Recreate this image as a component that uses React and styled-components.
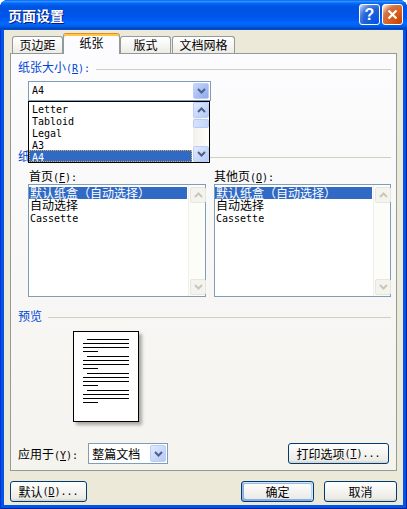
import React from "react";
import styled, { createGlobalStyle } from "styled-components";

const GlobalStyle = createGlobalStyle`
  html, body { margin: 0; padding: 0; background: #fff; }
  body {
    font-family: "Noto Sans CJK SC", "DejaVu Sans", sans-serif;
    font-size: 12px;
    color: #000;
  }
  * { box-sizing: border-box; }
`;

const Window = styled.div`
  width: 407px;
  height: 509px;
  display: flex;
  flex-direction: column;
  background: #0055e5;
  border-radius: 8px 8px 0 0;
  overflow: hidden;
  box-shadow: inset 1px 0 #0831d9, inset -1px 0 #001ea0, inset 0 -1px #001ea0;
`;

const TitleBar = styled.div`
  height: 30px;
  flex: none;
  display: flex;
  align-items: center;
  padding: 0 4px 1px 8px;
  background: linear-gradient(
    to bottom,
    #0058ee 0%, #3593ff 4%, #288eff 6%, #127dff 8%, #036ffc 10%,
    #0262ee 14%, #0057e5 20%, #0054e3 24%, #0055eb 56%, #005bf5 66%,
    #026afe 76%, #0062ef 86%, #0052d6 92%, #0040ab 94%, #0055e5 100%
  );
`;

const Title = styled.div`
  flex: 1;
  color: #fff;
  font-size: 14px;
  font-weight: bold;
  line-height: 16px;
  text-shadow: 1px 1px #0a1883;
`;

const CaptionButtons = styled.div`
  display: flex;
  gap: 2px;
`;

const CaptionButton = styled.div`
  width: 21px;
  height: 21px;
  border: 1px solid #fff;
  border-radius: 3px;
  display: grid;
  place-items: center;
  color: #fff;
  font-family: "Liberation Sans", sans-serif;
  font-weight: bold;
  font-size: 16px;
  line-height: 1;
  background: ${(p) =>
    p.$close
      ? "radial-gradient(circle at 90% 90%, #cc4600 0%, #dc6527 55%, #cd7546 70%, #ffccb2 90%, #fff 100%)"
      : "radial-gradient(circle at 90% 90%, #0054e9 0%, #2263d5 55%, #4479e4 70%, #a3bbec 90%, #fff 100%)"};
`;

const Body = styled.div`
  flex: 1;
  margin: 0 4px 4px;
  padding: 3px 6px 0;
  background: #ece9d8;
  display: flex;
  flex-direction: column;
`;

const TabStrip = styled.div`
  height: 20px;
  flex: none;
  display: flex;
  align-items: flex-end;
  padding-left: 2px;
  position: relative;
  z-index: 2;
`;

const Tab = styled.div`
  width: ${(p) => p.$w}px;
  height: ${(p) => (p.$active ? 21 : 17)}px;
  margin-bottom: ${(p) => (p.$active ? -1 : 0)}px;
  margin-left: ${(p) => p.$gap || 0}px;
  display: flex;
  align-items: center;
  justify-content: center;
  padding-bottom: ${(p) => (p.$active ? 2 : 0)}px;
  line-height: 12px;
  border: 1px solid #919b9c;
  border-bottom: none;
  border-radius: 3px 3px 0 0;
  background: ${(p) =>
    p.$active ? "#fcfcfe" : "linear-gradient(to bottom, #ffffff 0%, #f7f7f4 45%, #ecebe5 100%)"};
  ${(p) =>
    p.$active &&
    `
    border-top: 1px solid #e68b2c;
    box-shadow: inset 0 2px #ffc73c;
  `}
`;

const Panel = styled.div`
  position: relative;
  height: 418px;
  flex: none;
  border: 1px solid #919b9c;
  background: linear-gradient(to bottom, #fcfcfe, #f4f3ee);
  padding: 8px 5px 0 7px;
  display: flex;
  flex-direction: column;
`;

const GroupHeader = styled.div`
  display: flex;
  align-items: center;
  gap: 6px;
  height: 12px;
  line-height: 12px;
  color: #0046d5;
  white-space: nowrap;
  margin-top: ${(p) => p.$mt || 0}px;

  &::after {
    content: "";
    flex: 1;
    height: 1px;
    margin-top: 2px;
    background: #d0d0bf;
  }
`;

const Latin = styled.span`
  font-family: "DejaVu Sans Mono", monospace;
  font-size: 10px;
`;

const ComboWrap = styled.div`
  position: relative;
  width: 183px;
  margin: 7px 0 0 10px;
`;

const Combo = styled.div`
  width: ${(p) => p.$w}px;
  height: ${(p) => p.$h}px;
  border: 1px solid #7f9db9;
  background: #fff;
  display: flex;
  align-items: stretch;
  padding: 1px;
  margin-left: ${(p) => p.$ml || 0}px;
`;

const ComboText = styled.div`
  flex: 1;
  display: flex;
  align-items: center;
  padding-left: 2px;
  line-height: 12px;
`;

const ArrowButton = styled.div`
  width: 16px;
  flex: none;
  display: grid;
  place-items: center;
  border: 1px solid ${(p) => (p.$disabled ? "#e8e6dc" : "#bccdf8")};
  border-radius: 2px;
  background: ${(p) =>
    p.$disabled
      ? "#f4f3ee"
      : p.$hot
      ? "linear-gradient(135deg, #c9d8fc 0%, #a9c0f6 50%, #8fabef 100%)"
      : "linear-gradient(135deg, #e2ebfe 0%, #c8d7fb 55%, #b6c9f6 100%)"};
  height: ${(p) => (p.$h ? `${p.$h}px` : "auto")};
`;

const Dropdown = styled.div`
  position: absolute;
  left: 0;
  top: 100%;
  width: 182px;
  height: 62px;
  z-index: 5;
  border: 1px solid #000;
  background: #fff;
  display: flex;
`;

const Options = styled.div`
  flex: 1;
  margin-right: 1px;
`;

const Option = styled.div`
  height: 12px;
  line-height: 10px;
  padding-left: 2px;
  border: 1px solid transparent;
  white-space: nowrap;
  ${(p) =>
    p.$selected &&
    `
    background: #316ac5;
    color: #fff;
    border: 1px dotted #e8b04a;
  `}
`;

const ScrollBar = styled.div`
  width: ${(p) => p.$w}px;
  flex: none;
  display: flex;
  flex-direction: column;
  padding: ${(p) => (p.$disabled ? "2px 0 1px 1px" : "0")};
  background: ${(p) =>
    p.$disabled ? "#fcfcf9" : "linear-gradient(to right, #f3f1ec, #fefefb)"};
  border-left: ${(p) => (p.$disabled ? "1px solid #f0efe8" : "none")};
`;

const Thumb = styled.div`
  height: 9px;
  margin-top: 1px;
  border: 1px solid #b8cbf7;
  border-radius: 2px;
  background: linear-gradient(to right, #d6e2fd, #c4d5fb);
`;

const Spacer = styled.div`
  flex: 1;
`;

const SourceGrid = styled.div`
  display: grid;
  grid-template-columns: 178px 177px;
  column-gap: 8px;
  margin: 8px 0 0 10px;
`;

const Column = styled.div`
  display: flex;
  flex-direction: column;
`;

const FieldLabel = styled.div`
  height: 12px;
  line-height: 12px;
  white-space: nowrap;
  padding-left: ${(p) => p.$pl || 0}px;
`;

const ListBox = styled.div`
  margin-top: 2px;
  height: 113px;
  border: 1px solid #7f9db9;
  background: #fff;
  display: flex;
`;

const ListItems = styled.div`
  flex: 1;
  padding: 2px 1px 0 0;
`;

const ListItem = styled.div`
  height: 12px;
  line-height: 12px;
  padding-left: 1px;
  white-space: nowrap;
  ${(p) => p.$selected && "background: #316ac5; color: #fff;"}
`;

const PreviewPage = styled.div`
  width: 66px;
  height: 91px;
  margin: 9px 0 0 55px;
  border: 1px solid #000;
  background: #fff;
  padding: 7px 0 0 9px;
  box-shadow: 3px 3px 3px rgba(80, 80, 70, 0.45);
`;

const Para = styled.div`
  margin-bottom: 4px;
`;

const TextLine = styled.div`
  width: ${(p) => p.$w}px;
  height: 1px;
  margin: 0 0 3px ${(p) => p.$indent || 0}px;
  background: #000;
`;

const ApplyRow = styled.div`
  display: flex;
  align-items: center;
  height: 21px;
  margin-top: 21px;
`;

const Button = styled.div`
  width: ${(p) => p.$w}px;
  height: 21px;
  flex: none;
  display: flex;
  align-items: center;
  justify-content: center;
  line-height: 12px;
  border: 1px solid #003c74;
  border-radius: 3px;
  background: linear-gradient(180deg, #ffffff 0%, #ecebe6 86%, #d6d0c5 100%);
  white-space: nowrap;
  margin-left: ${(p) => (p.$auto ? "auto" : "0")};
  margin-right: ${(p) => p.$mr || 0}px;
  ${(p) =>
    p.$default &&
    `
    box-shadow: inset -1px 1px #cee7ff, inset 1px 2px #98b8ea, inset -2px 2px #bcd4f6,
      inset 1px -1px #89ade4, inset 2px -2px #89ade4;
  `}
`;

const ButtonRow = styled.div`
  display: flex;
  gap: 10px;
  margin-top: 10px;
`;

const Chevron = ({ up, color = "#4d6185" }) => (
  <svg width="9" height="6" viewBox="0 0 9 6">
    <path
      d={up ? "M1 5 L4.5 1.5 L8 5" : "M1 1 L4.5 4.5 L8 1"}
      fill="none"
      stroke={color}
      strokeWidth="2"
    />
  </svg>
);

const CloseGlyph = () => (
  <svg width="11" height="11" viewBox="0 0 11 11">
    <path d="M1.5 1.5 L9.5 9.5 M9.5 1.5 L1.5 9.5" stroke="#fff" strokeWidth="2.2" />
  </svg>
);

const Key = ({ k }) => (
  <Latin>
    (<u>{k}</u>)
  </Latin>
);

const paperSizes = ["Letter", "Tabloid", "Legal", "A3", "A4"];
const trays = ["默认纸盒（自动选择）", " 自动选择", "Cassette"];

const TrayList = () => (
  <ListBox>
    <ListItems>
      {trays.map((t, i) => (
        <ListItem key={t} $selected={i === 0}>
          {t === "Cassette" ? <Latin>{t}</Latin> : t}
        </ListItem>
      ))}
    </ListItems>
    <ScrollBar $w={17} $disabled>
      <ArrowButton $disabled $h={16}>
        <Chevron up color="#c9c7ba" />
      </ArrowButton>
      <Spacer />
      <ArrowButton $disabled $h={16}>
        <Chevron color="#c9c7ba" />
      </ArrowButton>
    </ScrollBar>
  </ListBox>
);

const PreviewParagraph = () => (
  <Para>
    <TextLine $w={42} $indent={4} />
    <TextLine $w={46} />
    <TextLine $w={46} />
    <TextLine $w={15} />
  </Para>
);

export default function App() {
  return (
    <>
      <GlobalStyle />
      <Window>
        <TitleBar>
          <Title>页面设置</Title>
          <CaptionButtons>
            <CaptionButton>?</CaptionButton>
            <CaptionButton $close>
              <CloseGlyph />
            </CaptionButton>
          </CaptionButtons>
        </TitleBar>
        <Body>
          <TabStrip>
            <Tab $w={51}>页边距</Tab>
            <Tab $w={57} $active>
              纸张
            </Tab>
            <Tab $w={51}>版式</Tab>
            <Tab $w={63} $gap={1}>
              文档网格
            </Tab>
          </TabStrip>
          <Panel>
            <GroupHeader>
              <span>
                纸张大小<Key k="R" />
                <Latin>:</Latin>
              </span>
            </GroupHeader>
            <ComboWrap>
              <Combo $w={183} $h={20}>
                <ComboText>
                  <Latin>A4</Latin>
                </ComboText>
                <ArrowButton $hot>
                  <Chevron />
                </ArrowButton>
              </Combo>
              <Dropdown>
                <Options>
                  {paperSizes.map((s) => (
                    <Option key={s} $selected={s === "A4"}>
                      <Latin>{s}</Latin>
                    </Option>
                  ))}
                </Options>
                <ScrollBar $w={16}>
                  <ArrowButton $h={16}>
                    <Chevron up />
                  </ArrowButton>
                  <Thumb />
                  <Spacer />
                  <ArrowButton $h={16}>
                    <Chevron />
                  </ArrowButton>
                </ScrollBar>
              </Dropdown>
            </ComboWrap>

            <GroupHeader $mt={49}>
              <span>
                纸张来源
              </span>
            </GroupHeader>
            <SourceGrid>
              <Column>
                <FieldLabel $pl={1}>
                  首页<Key k="F" />
                  <Latin>:</Latin>
                </FieldLabel>
                <TrayList />
              </Column>
              <Column>
                <FieldLabel>
                  其他页<Key k="O" />
                  <Latin>:</Latin>
                </FieldLabel>
                <TrayList />
              </Column>
            </SourceGrid>

            <GroupHeader $mt={13}>
              <span>预览</span>
            </GroupHeader>
            <PreviewPage>
              <PreviewParagraph />
              <PreviewParagraph />
              <PreviewParagraph />
              <PreviewParagraph />
            </PreviewPage>

            <ApplyRow>
              <FieldLabel>
                应用于<Key k="Y" />
                <Latin>:</Latin>
              </FieldLabel>
              <Combo $w={80} $h={21} $ml={10}>
                <ComboText>整篇文档</ComboText>
                <ArrowButton>
                  <Chevron />
                </ArrowButton>
              </Combo>
              <Button $w={101} $auto $mr={2}>
                打印选项<Key k="T" />
                <Latin>...</Latin>
              </Button>
            </ApplyRow>
          </Panel>
          <ButtonRow>
            <Button $w={77}>
              默认<Key k="D" />
              <Latin>...</Latin>
            </Button>
            <Button $w={73} $auto $default>
              确定
            </Button>
            <Button $w={73}>取消</Button>
          </ButtonRow>
        </Body>
      </Window>
    </>
  );
}
